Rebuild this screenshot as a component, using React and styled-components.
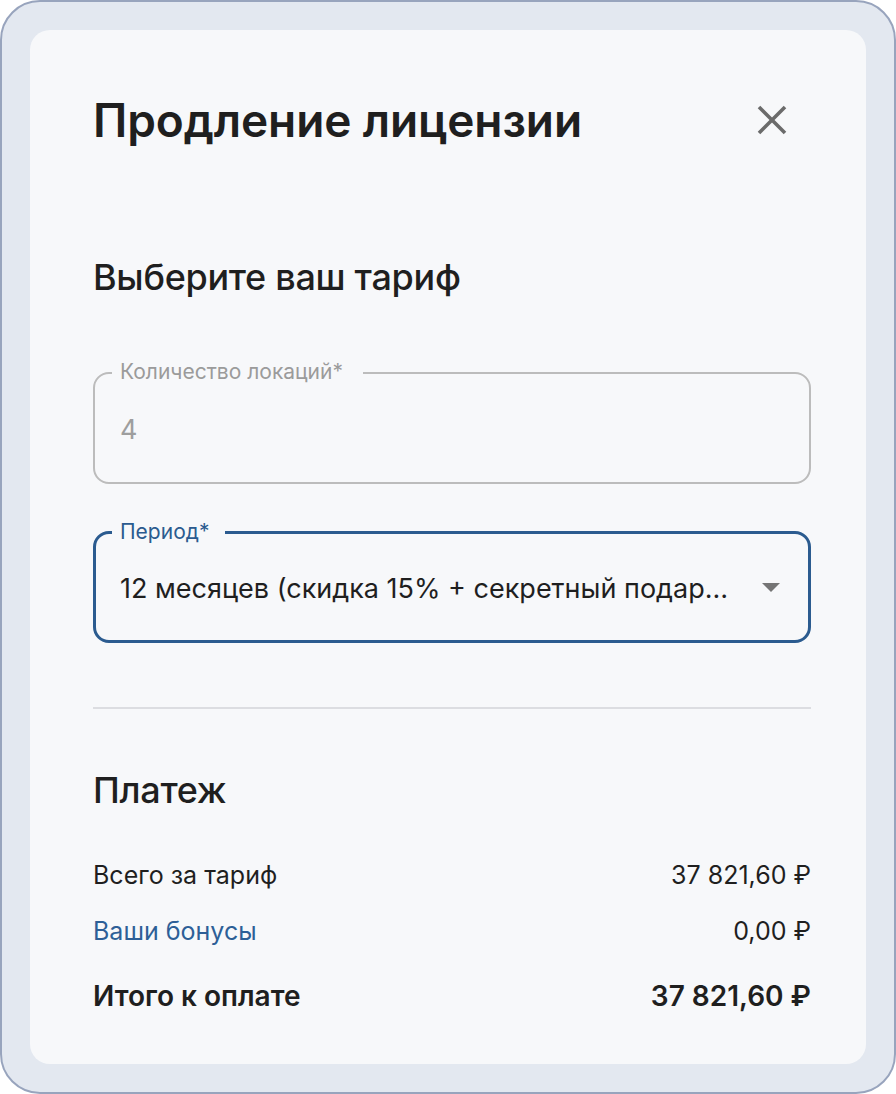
import React from 'react';
import styled, { createGlobalStyle } from 'styled-components';

const GlobalStyle = createGlobalStyle`
  html, body {
    margin: 0;
    padding: 0;
    background: #ffffff;
  }
  * {
    box-sizing: border-box;
  }
`;

const Frame = styled.div`
  width: 896px;
  height: 1094px;
  border: 2px solid #98a4bd;
  border-radius: 40px;
  background: #e3e8f0;
  padding: 28px;
  font-family: Inter, "Noto Sans", sans-serif;
  color: #1f1f1f;
`;

const Card = styled.div`
  height: 100%;
  background: #f7f8fa;
  border-radius: 20px;
  padding: 62px 55px 0 63px;
  display: flex;
  flex-direction: column;
`;

const Header = styled.div`
  height: 56px;
  display: flex;
  align-items: center;
  justify-content: space-between;
`;

const Title = styled.h1`
  margin: 0;
  font-size: 46px;
  font-weight: 600;
  line-height: 56px;
  letter-spacing: -0.1px;
`;

const CloseButton = styled.button`
  width: 48px;
  height: 48px;
  margin-right: 15px;
  padding: 0;
  border: none;
  background: none;
  display: flex;
  align-items: center;
  justify-content: center;
  cursor: pointer;
`;

const SectionTitle = styled.h2`
  margin: ${(p) => p.$top}px 0 0;
  font-size: 36px;
  font-weight: 500;
  line-height: 44px;
  letter-spacing: -0.3px;
`;

const Field = styled.div`
  position: relative;
  margin-top: ${(p) => p.$top}px;
  height: 112px;
  border: ${(p) => (p.$active ? '3px solid #2b5b8f' : '2px solid #bcbcbc')};
  border-radius: 16px;
  display: flex;
  align-items: center;
  padding: 0 ${(p) => (p.$active ? 26 : 25)}px 0 ${(p) => (p.$active ? 24 : 25)}px;
`;

const FieldLabel = styled.span`
  position: absolute;
  top: -15px;
  left: ${(p) => (p.$active ? 16 : 17)}px;
  padding: 0 ${(p) => p.$gap}px 0 8px;
  background: #f7f8fa;
  font-size: 21px;
  line-height: 26px;
  color: ${(p) => (p.$active ? '#2b5b8f' : '#9b9b9b')};
`;

const FieldValue = styled.span`
  flex: 1;
  min-width: 0;
  font-size: 27px;
  line-height: 34px;
  color: ${(p) => (p.$muted ? '#9e9e9e' : '#1f1f1f')};
  white-space: nowrap;
  overflow: hidden;
  text-overflow: ellipsis;
  margin-top: 4px;
`;

const Caret = styled.span`
  width: 0;
  height: 0;
  margin-left: 30px;
  margin-right: 2px;
  border-left: 9px solid transparent;
  border-right: 9px solid transparent;
  border-top: 9px solid #757575;
`;

const Divider = styled.hr`
  margin: 64px 0 0;
  border: none;
  height: 2px;
  background: #dcdde1;
`;

const Row = styled.div`
  margin-top: ${(p) => p.$top}px;
  display: flex;
  justify-content: space-between;
  align-items: center;
  height: 34px;
  font-size: ${(p) => (p.$total ? 28 : 25)}px;
  font-weight: ${(p) => (p.$total ? 600 : 400)};
`;

const RowLabel = styled.span`
  color: ${(p) => (p.$link ? '#2d5f97' : '#1f1f1f')};
`;

const Amount = styled.span`
  color: #1f1f1f;
`;

function CloseIcon() {
  return (
    <svg width="30" height="30" viewBox="0 0 30 30" fill="none">
      <path d="M2 2 L28 28 M28 2 L2 28" stroke="#6b6b6b" strokeWidth="3.6" strokeLinecap="butt" />
    </svg>
  );
}

export default function App() {
  return (
    <>
      <GlobalStyle />
      <Frame>
        <Card>
          <Header>
            <Title>Продление лицензии</Title>
            <CloseButton aria-label="Закрыть">
              <CloseIcon />
            </CloseButton>
          </Header>

          <SectionTitle $top={107}>Выберите ваш тариф</SectionTitle>

          <Field $top={73}>
            <FieldLabel $gap={20}>Количество локаций*</FieldLabel>
            <FieldValue $muted>4</FieldValue>
          </Field>

          <Field $top={47} $active>
            <FieldLabel $active $gap={16}>Период*</FieldLabel>
            <FieldValue>12 месяцев (скидка 15% + секретный подарок)</FieldValue>
            <Caret />
          </Field>

          <Divider />

          <SectionTitle $top={59}>Платеж</SectionTitle>

          <Row $top={46}>
            <RowLabel>Всего за тариф</RowLabel>
            <Amount>37 821,60 ₽</Amount>
          </Row>
          <Row $top={22}>
            <RowLabel $link>Ваши бонусы</RowLabel>
            <Amount>0,00 ₽</Amount>
          </Row>
          <Row $top={31} $total>
            <RowLabel>Итого к оплате</RowLabel>
            <Amount>37 821,60 ₽</Amount>
          </Row>
        </Card>
      </Frame>
    </>
  );
}
